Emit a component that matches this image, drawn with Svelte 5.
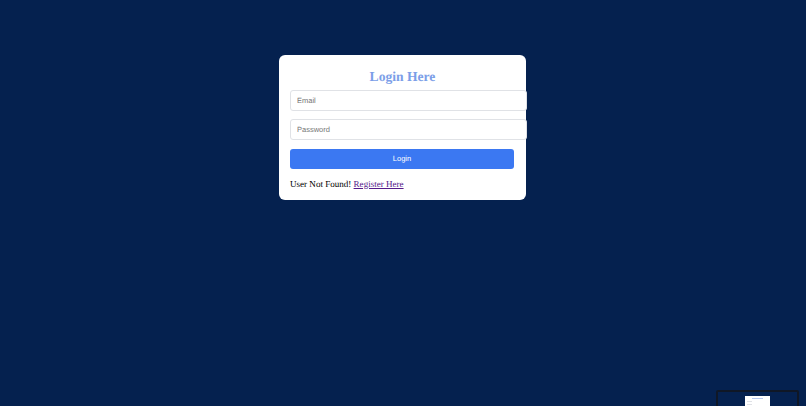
<script lang="ts">
	let email = '';
	let password = '';
</script>

<div class="page">
	<form class="card" on:submit|preventDefault>
		<h2 class="title">Login Here</h2>
		<input class="field" type="email" placeholder="Email" bind:value={email} />
		<input class="field" type="password" placeholder="Password" bind:value={password} />
		<button class="submit" type="submit">Login</button>
		<p class="note">User Not Found! <a href="#register">Register Here</a></p>
	</form>

	<!-- little preview window in the corner -->
	<div class="preview">
		<div class="preview-card">
			<div class="preview-title"></div>
			<div class="preview-line"></div>
			<div class="preview-line"></div>
		</div>
	</div>
</div>

<style>
	:global(body) {
		margin: 0;
		background: #05214f;
	}

	.page {
		position: relative;
		height: 406px;
		overflow: hidden;
		background: #05214f;
		padding: 54.6px 1px 0 0;
		box-sizing: border-box;
		display: flex;
		justify-content: center;
		align-items: flex-start;
		text-rendering: geometricPrecision;
	}

	.card {
		width: 247px;
		height: 145.6px;
		box-sizing: border-box;
		padding: 13px 11px 0;
		background: #fff;
		border-radius: 6px;
		font-family: "Liberation Serif", serif;
		flex-shrink: 0;
	}

	.title {
		margin: 0 0 4.4px;
		height: 18px;
		line-height: 18px;
		font-size: 13.6px;
		font-weight: 700;
		text-align: center;
		color: #7b9ee8;
	}

	.field {
		display: block;
		width: 237px;
		height: 21px;
		box-sizing: border-box;
		margin-bottom: 8px;
		padding: 0 6px;
		background: #fff;
		border: 1px solid #e0e2e6;
		border-radius: 3px;
		font-family: "Liberation Sans", sans-serif;
		font-size: 7.5px;
		text-rendering: geometricPrecision;
		outline: none;
	}

	.field::placeholder {
		color: #757575;
		opacity: 1;
	}

	.submit {
		display: block;
		width: 224px;
		height: 20px;
		margin: 8.6px 0 0;
		padding: 0;
		background: #3b78f2;
		color: #fff;
		border: none;
		border-radius: 3px;
		font-family: "Liberation Sans", sans-serif;
		font-size: 7.6px;
		font-weight: 400;
		text-rendering: geometricPrecision;
	}

	.note {
		margin: 10px 0 0;
		font-size: 9.05px;
		line-height: 11px;
		color: #000;
	}

	.note a {
		color: #551a8b;
	}

	.preview {
		position: absolute;
		left: 716px;
		top: 390px;
		width: 83px;
		height: 30px;
		box-sizing: border-box;
		border: 2px solid #0f1726;
		background: #05214f;
		border-radius: 2px;
		display: flex;
		justify-content: center;
		padding-top: 4px;
	}

	.preview-card {
		width: 25px;
		height: 30px;
		background: #fff;
		padding: 2px 2px;
		box-sizing: border-box;
	}

	.preview-title {
		width: 11px;
		height: 1px;
		margin: 0 auto 2px;
		background: #b9c9ef;
	}

	.preview-line {
		width: 5px;
		height: 1px;
		margin-bottom: 2px;
		background: #dfe1e6;
	}
</style>
